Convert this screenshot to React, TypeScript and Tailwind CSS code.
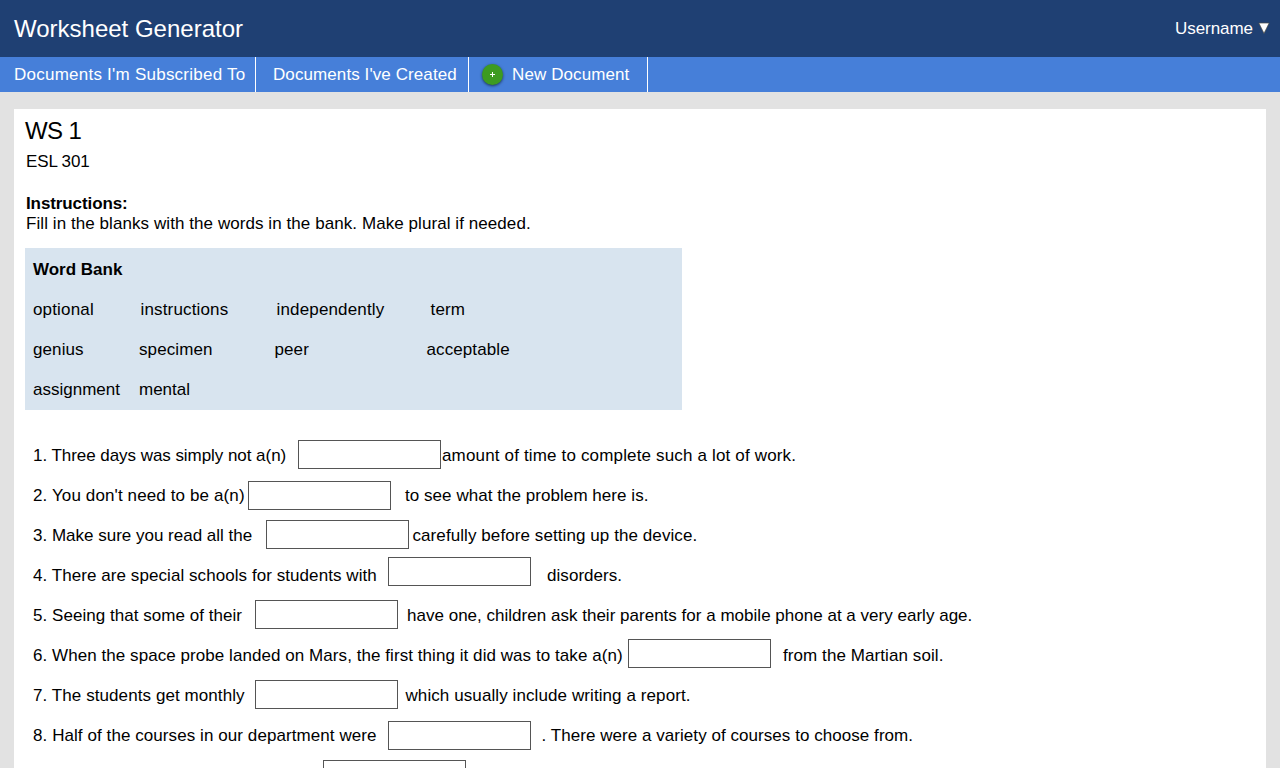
type Question = {
  lead: string;
  tail: string;
  leadClass: string;
  boxClass: string;
  tailClass: string;
};

const questions: Question[] = [
  { lead: '1. Three days was simply not a(n)', tail: 'amount of time to complete such a lot of work.', leadClass: 'w-[265px] tracking-[-0.05px]', boxClass: 'mt-[5px]', tailClass: 'ml-px tracking-[0.16px]' },
  { lead: "2. You don't need to be a(n)", tail: 'to see what the problem here is.', leadClass: 'w-[215px] tracking-[0.12px]', boxClass: 'mt-[6px]', tailClass: 'ml-[14px] tracking-[0.05px]' },
  { lead: '3. Make sure you read all the', tail: 'carefully before setting up the device.', leadClass: 'w-[233px]', boxClass: 'mt-[5px]', tailClass: 'ml-[3.5px] tracking-[0.08px]' },
  { lead: '4. There are special schools for students with', tail: 'disorders.', leadClass: 'w-[355px] tracking-[0.065px]', boxClass: 'mt-[2px]', tailClass: 'ml-[16px] tracking-[0.05px]' },
  { lead: '5. Seeing that some of their', tail: 'have one, children ask their parents for a mobile phone at a very early age.', leadClass: 'w-[222px] tracking-[0.04px]', boxClass: 'mt-[5px]', tailClass: 'ml-[9px] tracking-[0.015px]' },
  { lead: '6. When the space probe landed on Mars, the first thing it did was to take a(n)', tail: 'from the Martian soil.', leadClass: 'w-[595px] tracking-[0.06px]', boxClass: 'mt-[4px]', tailClass: 'ml-[12px] tracking-[0.08px]' },
  { lead: '7. The students get monthly', tail: 'which usually include writing a report.', leadClass: 'w-[222px] tracking-[0.08px]', boxClass: 'mt-[5px]', tailClass: 'ml-[7.5px] tracking-[0.09px]' },
  { lead: '8. Half of the courses in our department were', tail: '. There were a variety of courses to choose from.', leadClass: 'w-[355px] tracking-[0.075px]', boxClass: 'mt-[6px]', tailClass: 'ml-[10.5px] tracking-[0.05px]' },
  { lead: '', tail: '', leadClass: 'w-[290px]', boxClass: 'mt-[5px]', tailClass: '' },
];

function Header() {
  return (
    <header className="flex h-[57px] shrink-0 items-center justify-between bg-[#1f4073] pl-[14px] pr-[10px] text-white">
      <h1 className="text-2xl">Worksheet Generator</h1>
      <button className="flex items-center gap-[5px]">
        <span className="tracking-[-0.05px]">Username</span>
        <svg width="12" height="12" viewBox="0 0 12 12" className="-mt-px">
          <path d="M.8 1h10.4L6 11.4z" fill="#fff" stroke="#4b4b45" strokeWidth="0.7" />
        </svg>
      </button>
    </header>
  );
}

function Nav() {
  return (
    <nav className="flex h-[35px] shrink-0 bg-[#467fd9] text-white">
      <a className="flex w-[256px] items-center border-r border-white pl-[14px] tracking-[0.24px]">Documents I'm Subscribed To</a>
      <a className="flex w-[213px] items-center border-r border-white pl-[17px] tracking-[0.09px]">Documents I've Created</a>
      <a className="flex w-[179px] items-center border-r border-white pl-[12px] tracking-[0.1px]">
        <span className="-mt-px mr-[9px] ml-px flex size-[21px] items-center justify-center rounded-full bg-[#3d9b21] shadow-[0_1px_3px_rgba(0,0,0,0.6)]">
          <svg width="5" height="5" viewBox="0 0 5 5">
            <path d="M2.5 0v5M0 2.5h5" stroke="#fff" strokeWidth="1" />
          </svg>
        </span>
        New Document
      </a>
    </nav>
  );
}

function WordBank() {
  return (
    <section className="mt-[14px] ml-[11px] h-[162px] w-[657px] bg-[#d8e4ef] pt-[2px] pl-2 leading-10">
      <h3 className="font-bold">Word Bank</h3>
      <div className="flex tracking-[0.16px]">
        <span className="w-[107.5px]">optional</span>
        <span className="w-[136px]">instructions</span>
        <span className="w-[154px]">independently</span>
        <span>term</span>
      </div>
      <div className="flex tracking-[0.1px]">
        <span className="w-[106px]">genius</span>
        <span className="w-[135.5px]">specimen</span>
        <span className="w-[152px]">peer</span>
        <span>acceptable</span>
      </div>
      <div className="flex">
        <span className="w-[106px]">assignment</span>
        <span>mental</span>
      </div>
    </section>
  );
}

export default function App() {
  return (
    <div className="flex h-[768px] w-[1280px] flex-col overflow-hidden bg-[#e2e2e2] font-['Liberation_Sans',Arial,sans-serif] text-[17px] leading-5 whitespace-nowrap text-black">
      <Header />
      <Nav />
      <main className="mx-[14px] mt-[17px] min-h-0 flex-1 overflow-hidden bg-white">
        <h2 className="pt-[6px] pl-[11px] text-2xl tracking-[-0.6px]">WS 1</h2>
        <p className="pt-[5px] pl-[12px] tracking-[-0.15px]">ESL 301</p>
        <div className="mt-[22px] pl-[12px]">
          <p className="font-bold tracking-[-0.1px]">Instructions:</p>
          <p className="tracking-[0.07px]">Fill in the blanks with the words in the bank. Make plural if needed.</p>
        </div>
        <WordBank />
        <ol className="mt-[25px] pl-[19px] leading-10">
          {questions.map((q, i) => (
            <li key={i} className="flex h-10 items-start">
              <span className={`mt-px shrink-0 ${q.leadClass}`}>{q.lead}</span>
              <input aria-label={`Answer ${i + 1}`} className={`h-[29px] w-[143px] shrink-0 border border-[#555] bg-white px-2 leading-5 outline-none ${q.boxClass}`} />
              <span className={`mt-px ${q.tailClass}`}>{q.tail}</span>
            </li>
          ))}
        </ol>
      </main>
    </div>
  );
}
